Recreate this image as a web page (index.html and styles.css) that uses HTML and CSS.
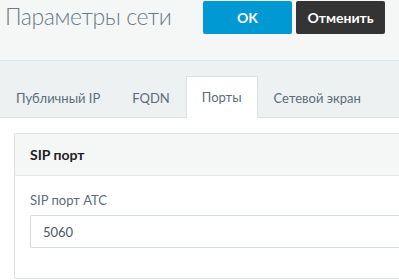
FILE: index.html
```
<!DOCTYPE html>
<html lang="ru">
<head>
    <meta charset="UTF-8">
    <meta name="viewport" content="width=device-width, initial-scale=1.0">
    <title>Параметры сети</title>
    <link rel="stylesheet" href="styles.css">
</head>
<body>
    <header class="page-head">
        <h1 class="page-title">Параметры сети</h1>
        <div class="actions">
            <button class="btn btn-primary">OK</button>
            <button class="btn btn-dark">Отменить</button>
        </div>
    </header>
    <nav class="tabs">
        <a href="#" class="tab">Публичный IP</a>
        <a href="#" class="tab">FQDN</a>
        <a href="#" class="tab active">Порты</a>
        <a href="#" class="tab">Сетевой экран</a>
    </nav>
    <section class="content">
        <div class="panel">
            <div class="panel-head">SIP порт</div>
            <div class="panel-body">
                <label class="field-label" for="sip-port">SIP порт АТС</label>
                <input type="text" id="sip-port" class="field" value="5060">
            </div>
        </div>
    </section>
</body>
</html>
```

FILE: styles.css
```
body {
    font-family: Lato, "Open Sans", sans-serif;
    margin: 0;
    padding: 0;
    background-color: #fff;
    overflow: hidden;
}
.page-head {
    background-color: #f5f7f7;
    height: 60px;
    display: flex;
    align-items: flex-start;
    padding-left: 5px;
}
.page-title {
    margin: 0;
    font-size: 23px;
    font-weight: 300;
    letter-spacing: -0.4px;
    color: #6b7b88;
    line-height: 32px;
    width: 198px;
}
.actions {
    display: flex;
    gap: 4px;
    padding-top: 1px;
}
.btn {
    width: 89px;
    height: 33px;
    border: none;
    border-radius: 2px;
    color: #fff;
    font-family: Lato, sans-serif;
    font-size: 14px;
    font-weight: 700;
    cursor: pointer;
}
.btn-primary {
    background-color: #0099d3;
}
.btn-dark {
    background-color: #343434;
}
.tabs {
    background-color: #eef1f2;
    border-top: 1px solid #dde2e4;
    border-bottom: 1px solid #dde2e4;
    height: 56px;
    display: flex;
    align-items: flex-end;
}
.tab {
    color: #5b6d7a;
    text-decoration: none;
    font-size: 13px;
    height: 40px;
    line-height: 40px;
    padding: 0 15px;
    margin-bottom: -1px;
    border: 1px solid transparent;
    border-bottom: none;
}
.tab.active {
    background-color: #fff;
    border-color: #dde2e4;
    height: 41px;
}
.content {
    padding: 15px 0 0 14px;
}
.panel {
    border: 1px solid #dde2e4;
    border-right: none;
    border-radius: 2px 0 0 2px;
}
.panel-head {
    background-color: #f5f7f7;
    border-bottom: 1px solid #e6eaeb;
    height: 41px;
    line-height: 41px;
    padding-left: 15px;
    font-size: 14px;
    font-weight: 700;
    color: #222;
}
.panel-body {
    padding: 16px 0 30px 15px;
}
.field-label {
    display: block;
    font-size: 13px;
    color: #5b6d7a;
    margin-bottom: 7px;
}
.field {
    display: block;
    width: 100%;
    box-sizing: border-box;
    height: 33px;
    border: 1px solid #d5dcdf;
    border-right: none;
    border-radius: 2px 0 0 2px;
    padding: 0 12px;
    font-family: Lato, sans-serif;
    font-size: 13px;
    color: #4a5a66;
}
```
